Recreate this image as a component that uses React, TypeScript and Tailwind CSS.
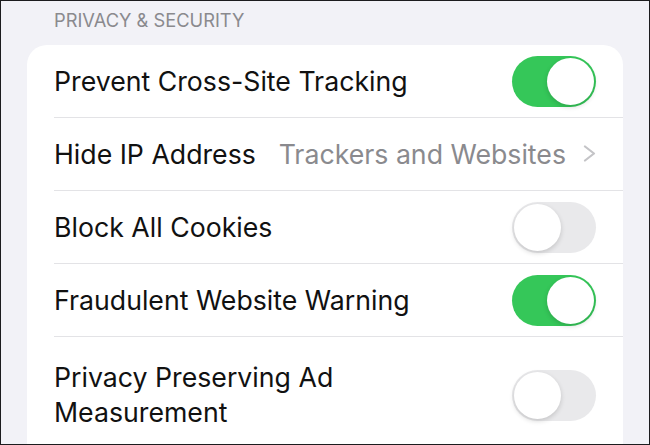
type ToggleProps = { on: boolean };

const Toggle = ({ on }: ToggleProps) => (
  <div
    className={
      on
        ? "w-[84px] h-[51px] rounded-full bg-[#35c759] p-[2px] flex justify-end shrink-0"
        : "w-[84px] h-[51px] rounded-full bg-[#e9e9eb] p-[2px] flex justify-start shrink-0"
    }
  >
    <div className="w-[47px] h-[47px] rounded-full bg-white shadow-[0_2px_5px_rgba(0,0,0,0.16)]" />
  </div>
);

type RowProps = {
  label: React.ReactNode;
  last?: boolean;
  children: React.ReactNode;
};

const Row = ({ label, last, children }: RowProps) => (
  <div className={last ? "pl-[27px] flex-1" : "pl-[27px]"}>
    <div
      className={
        last
          ? "pt-[23px] pr-[27px] flex items-center justify-between"
          : "h-[73px] pr-[27px] flex items-center justify-between border-b border-[#e3e3e6]"
      }
    >
      <span className="text-[26.7px] leading-[35px] text-[#111]">{label}</span>
      {children}
    </div>
  </div>
);

export default function App() {
  return (
    <div
      className="w-[650px] h-[445px] overflow-hidden bg-[#f2f2f7] border border-[#1c1c1e] flex flex-col"
      style={{ fontFamily: "Inter, 'Liberation Sans', sans-serif" }}
    >
      <div className="h-[44px] pl-[53px] pt-[7px] shrink-0">
        <span className="text-[18.3px] leading-[24px] text-[#8a8a8e]">
          PRIVACY &amp; SECURITY
        </span>
      </div>
      <div className="mx-[26px] bg-white rounded-t-[20px] flex-1 flex flex-col">
        <Row label="Prevent Cross-Site Tracking">
          <Toggle on />
        </Row>
        <Row label="Hide IP Address">
          <div className="flex items-center gap-[17px]">
            <span className="text-[26.7px] text-[#8a8a8e]">Trackers and Websites</span>
            <svg width="14" height="17" viewBox="0 0 14 17" className="mr-[-1px]">
              <polyline
                points="2,1.5 11,8.5 2,15.5"
                fill="none"
                stroke="#c4c4c7"
                strokeWidth="2.2"
                strokeLinecap="round"
                strokeLinejoin="round"
              />
            </svg>
          </div>
        </Row>
        <Row label="Block All Cookies">
          <Toggle on={false} />
        </Row>
        <Row label="Fraudulent Website Warning">
          <Toggle on />
        </Row>
        <Row
          last
          label={
            <>
              Privacy Preserving Ad
              <br />
              Measurement
            </>
          }
        >
          <Toggle on={false} />
        </Row>
      </div>
    </div>
  );
}
